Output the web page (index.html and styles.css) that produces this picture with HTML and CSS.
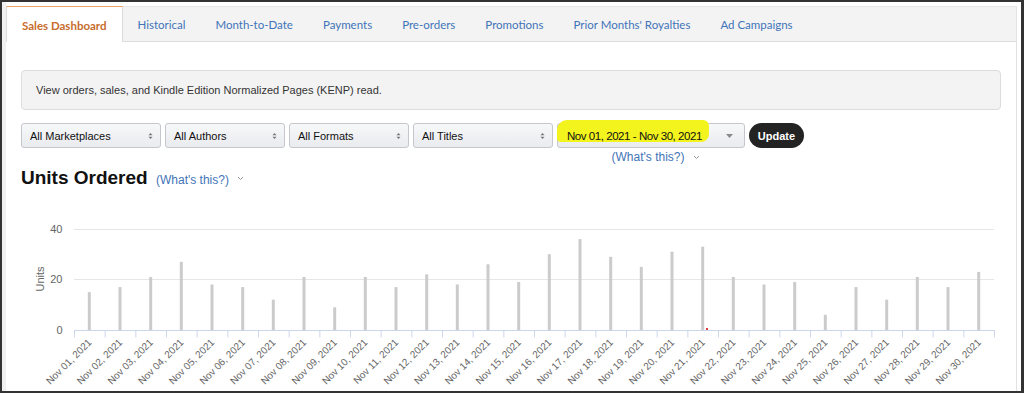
FILE: index.html
```html
<!DOCTYPE html>
<html lang="en">
<head>
<meta charset="utf-8">
<title>Sales Dashboard</title>
<link rel="stylesheet" href="styles.css">
</head>
<body>
<div class="frame">
  <div class="page">
    <nav class="tabs">
      <a class="tab active">Sales Dashboard</a>
      <a class="tab">Historical</a>
      <a class="tab">Month-to-Date</a>
      <a class="tab">Payments</a>
      <a class="tab">Pre-orders</a>
      <a class="tab">Promotions</a>
      <a class="tab">Prior Months' Royalties</a>
      <a class="tab">Ad Campaigns</a>
    </nav>
    <main class="content">
      <div class="info">View orders, sales, and Kindle Edition Normalized Pages (KENP) read.</div>
      <div class="filters">
        <div class="select w-market">All Marketplaces<svg class="updown" width="5" height="8" viewBox="0 0 5 8"><path d="M0.5 3.2 L2.5 1 L4.5 3.2Z M0.5 4.8 L2.5 7 L4.5 4.8Z"/></svg></div>
        <div class="select w-author">All Authors<svg class="updown" width="5" height="8" viewBox="0 0 5 8"><path d="M0.5 3.2 L2.5 1 L4.5 3.2Z M0.5 4.8 L2.5 7 L4.5 4.8Z"/></svg></div>
        <div class="select w-format">All Formats<svg class="updown" width="5" height="8" viewBox="0 0 5 8"><path d="M0.5 3.2 L2.5 1 L4.5 3.2Z M0.5 4.8 L2.5 7 L4.5 4.8Z"/></svg></div>
        <div class="select w-title">All Titles<svg class="updown" width="5" height="8" viewBox="0 0 5 8"><path d="M0.5 3.2 L2.5 1 L4.5 3.2Z M0.5 4.8 L2.5 7 L4.5 4.8Z"/></svg></div>
        <div class="date-col">
          <div class="select date"><span class="hl">Nov 01, 2021 - Nov 30, 2021</span><svg class="caret" width="7" height="4" viewBox="0 0 7 4"><path d="M0 0 L7 0 L3.5 4Z"/></svg></div>
          <div class="whats-row"><span class="link">(What's this?)</span><svg class="chev" width="7" height="5" viewBox="0 0 7 5"><path d="M1 1 L3.5 3.5 L6 1"/></svg></div>
        </div>
        <button class="update">Update</button>
      </div>
      <h2 class="title">Units Ordered <span class="link small">(What's this?)</span><svg class="chev" width="7" height="5" viewBox="0 0 7 5"><path d="M1 1 L3.5 3.5 L6 1"/></svg></h2>
      <svg class="chart" width="980" height="201" viewBox="0 0 980 201">
        <g class="grid">
          <line x1="53" y1="39.5" x2="973" y2="39.5"/>
          <line x1="53" y1="89.5" x2="973" y2="89.5"/>
        </g>
        <g class="ylab">
          <text x="41.5" y="43">40</text>
          <text x="41.5" y="93">20</text>
          <text x="41.5" y="144">0</text>
        </g>
        <text class="ytitle" transform="translate(23,89) rotate(-90)">Units</text>
        <g class="bars">
          <rect x="66.8" y="102.1" width="3" height="37.9"/>
          <rect x="97.5" y="97.1" width="3" height="42.9"/>
          <rect x="128.2" y="87" width="3" height="53"/>
          <rect x="158.8" y="71.8" width="3" height="68.2"/>
          <rect x="189.5" y="94.5" width="3" height="45.5"/>
          <rect x="220.2" y="97.1" width="3" height="42.9"/>
          <rect x="250.8" y="109.7" width="3" height="30.3"/>
          <rect x="281.5" y="87" width="3" height="53"/>
          <rect x="312.2" y="117.3" width="3" height="22.7"/>
          <rect x="342.8" y="87" width="3" height="53"/>
          <rect x="373.5" y="97.1" width="3" height="42.9"/>
          <rect x="404.2" y="84.4" width="3" height="55.6"/>
          <rect x="434.8" y="94.5" width="3" height="45.5"/>
          <rect x="465.5" y="74.3" width="3" height="65.7"/>
          <rect x="496.2" y="92" width="3" height="48"/>
          <rect x="526.8" y="64.2" width="3" height="75.8"/>
          <rect x="557.5" y="49.1" width="3" height="90.9"/>
          <rect x="588.2" y="66.8" width="3" height="73.2"/>
          <rect x="618.8" y="76.9" width="3" height="63.1"/>
          <rect x="649.5" y="61.7" width="3" height="78.3"/>
          <rect x="680.2" y="56.7" width="3" height="83.3"/>
          <rect x="710.8" y="87" width="3" height="53"/>
          <rect x="741.5" y="94.5" width="3" height="45.5"/>
          <rect x="772.2" y="92" width="3" height="48"/>
          <rect x="802.8" y="124.8" width="3" height="15.2"/>
          <rect x="833.5" y="97.1" width="3" height="42.9"/>
          <rect x="864.2" y="109.7" width="3" height="30.3"/>
          <rect x="894.8" y="87" width="3" height="53"/>
          <rect x="925.5" y="97.1" width="3" height="42.9"/>
          <rect x="956.2" y="81.9" width="3" height="58.1"/>
        </g>
        <rect class="marker" x="685" y="138" width="2" height="2"/>
        <line class="axis" x1="53" y1="140.5" x2="974" y2="140.5"/>
        <line class="ticks" x1="53" y1="144" x2="974" y2="144"/>
        <g class="xlab">
          <text transform="translate(71.3,153) rotate(-45)">Nov 01, 2021</text>
          <text transform="translate(102,153) rotate(-45)">Nov 02, 2021</text>
          <text transform="translate(132.7,153) rotate(-45)">Nov 03, 2021</text>
          <text transform="translate(163.3,153) rotate(-45)">Nov 04, 2021</text>
          <text transform="translate(194,153) rotate(-45)">Nov 05, 2021</text>
          <text transform="translate(224.7,153) rotate(-45)">Nov 06, 2021</text>
          <text transform="translate(255.3,153) rotate(-45)">Nov 07, 2021</text>
          <text transform="translate(286,153) rotate(-45)">Nov 08, 2021</text>
          <text transform="translate(316.7,153) rotate(-45)">Nov 09, 2021</text>
          <text transform="translate(347.3,153) rotate(-45)">Nov 10, 2021</text>
          <text transform="translate(378,153) rotate(-45)">Nov 11, 2021</text>
          <text transform="translate(408.7,153) rotate(-45)">Nov 12, 2021</text>
          <text transform="translate(439.3,153) rotate(-45)">Nov 13, 2021</text>
          <text transform="translate(470,153) rotate(-45)">Nov 14, 2021</text>
          <text transform="translate(500.7,153) rotate(-45)">Nov 15, 2021</text>
          <text transform="translate(531.3,153) rotate(-45)">Nov 16, 2021</text>
          <text transform="translate(562,153) rotate(-45)">Nov 17, 2021</text>
          <text transform="translate(592.7,153) rotate(-45)">Nov 18, 2021</text>
          <text transform="translate(623.3,153) rotate(-45)">Nov 19, 2021</text>
          <text transform="translate(654,153) rotate(-45)">Nov 20, 2021</text>
          <text transform="translate(684.7,153) rotate(-45)">Nov 21, 2021</text>
          <text transform="translate(715.3,153) rotate(-45)">Nov 22, 2021</text>
          <text transform="translate(746,153) rotate(-45)">Nov 23, 2021</text>
          <text transform="translate(776.7,153) rotate(-45)">Nov 24, 2021</text>
          <text transform="translate(807.3,153) rotate(-45)">Nov 25, 2021</text>
          <text transform="translate(838,153) rotate(-45)">Nov 26, 2021</text>
          <text transform="translate(868.7,153) rotate(-45)">Nov 27, 2021</text>
          <text transform="translate(899.3,153) rotate(-45)">Nov 28, 2021</text>
          <text transform="translate(930,153) rotate(-45)">Nov 29, 2021</text>
          <text transform="translate(960.7,153) rotate(-45)">Nov 30, 2021</text>
        </g>
      </svg>
    </main>
  </div>
</div>
</body>
</html>
```

FILE: styles.css
```css
html, body {
  margin: 0;
  padding: 0;
  background: #fff;
}

body {
  font-family: "Liberation Sans", Arial, sans-serif;
  color: #111;
}

.frame {
  width: 1024px;
  height: 393px;
  box-sizing: border-box;
  border: 2px solid #333;
  border-right-width: 3px;
  overflow: hidden;
  background: #fff;
}

.page {
  height: 100%;
  box-sizing: border-box;
  padding: 4px 4px 0 0;
  border-left: 4px solid #f1f1f1;
  display: flex;
  flex-direction: column;
}

/* Tabs */
.tabs {
  display: flex;
  height: 36px;
  flex: none;
  box-sizing: border-box;
  background: #f3f3f3;
  border-top: 1px solid #e6e6e6;
  border-right: 1px solid #e3e3e3;
  border-bottom: 1px solid #dcdcdc;
}

.tab {
  display: flex;
  align-items: center;
  padding: 1px 15px 0 15px;
  font-family: Lato, "Liberation Sans", sans-serif;
  font-size: 11.5px;
  color: #3f74b8;
  text-decoration: none;
  white-space: nowrap;
}

.tab.active {
  background: #fff;
  color: #c76d2d;
  font-weight: bold;
  padding: 1px 15px 0 15px;
  margin: -1px 0 -1px 0;
  border-left: 1px solid #dcdcdc;
  border-right: 1px solid #dcdcdc;
  border-top: 1px solid #efa465;
}

/* Content */
.content {
  flex: 1;
  box-sizing: border-box;
  padding: 28px 15px 0 15px;
  border-right: 1px solid #e2e2e2;
  overflow: hidden;
}

.info {
  height: 40px;
  box-sizing: border-box;
  display: flex;
  align-items: center;
  padding-left: 14px;
  background: #f3f3f3;
  border: 1px solid #dddddd;
  border-radius: 4px;
  font-size: 11px;
  color: #333;
}

/* Filters */
.filters {
  display: flex;
  align-items: flex-start;
  gap: 4px;
  margin-top: 13px;
  height: 43px;
}

.select {
  height: 25px;
  box-sizing: border-box;
  display: flex;
  align-items: center;
  justify-content: space-between;
  padding: 0 7px 0 8px;
  background: linear-gradient(#f7f8fa, #e9ebee);
  border: 1px solid #c4c7cb;
  border-radius: 3px;
  font-size: 11px;
  color: #111;
  white-space: nowrap;
}

.w-market { width: 140px; }
.w-author { width: 120px; }
.w-format { width: 120px; }
.w-title { width: 140px; }

.updown path { fill: #777; }

.date-col {
  width: 188px;
  display: flex;
  flex-direction: column;
}

.select.date {
  width: 188px;
  padding: 0 11px 0 9px;
}

.hl {
  background: #f3f31d;
  padding: 10px 7px 0 10px;
  margin: -10px 0 0 -10px;
  border-radius: 10px 6px 8px 4px;
  font-size: 11.5px;
  letter-spacing: -0.45px;
  color: #111;
}

.caret path { fill: #8a8a8a; }

.whats-row {
  height: 18px;
  display: flex;
  align-items: center;
  justify-content: center;
  gap: 9px;
  padding-left: 10px;
  font-size: 12px;
}

.link {
  color: #3f74b8;
}

.chev path {
  fill: none;
  stroke: #999;
  stroke-width: 1;
}

.update {
  width: 55px;
  height: 25px;
  padding: 0;
  border: 0;
  border-radius: 13px;
  background: #232323;
  color: #fff;
  font-family: "Liberation Sans", Arial, sans-serif;
  font-weight: bold;
  font-size: 11px;
}

/* Heading */
.title {
  margin: 0;
  height: 24px;
  line-height: 24px;
  font-size: 19px;
  font-weight: bold;
  color: #111;
  white-space: nowrap;
}

.title .small {
  font-size: 12px;
  font-weight: normal;
  margin-left: 3px;
}

.title .chev {
  margin-left: 8px;
  vertical-align: middle;
}

/* Chart */
.chart {
  display: block;
  font-family: "Liberation Sans", Arial, sans-serif;
}

.grid line {
  stroke: #e6e6e6;
  stroke-width: 1;
}

.ylab text {
  font-size: 11px;
  fill: #666;
  text-anchor: end;
}

.ytitle {
  font-size: 11px;
  fill: #666;
  text-anchor: middle;
}

.bars rect {
  fill: #cbcbcb;
}

.marker {
  fill: #e23b3b;
}

.axis {
  stroke: #ccd6eb;
  stroke-width: 1;
}

.ticks {
  stroke: #ccd6eb;
  stroke-width: 7;
  stroke-dasharray: 1 29.667;
}

.xlab text {
  font-size: 10px;
  fill: #666;
  text-anchor: end;
}
```
